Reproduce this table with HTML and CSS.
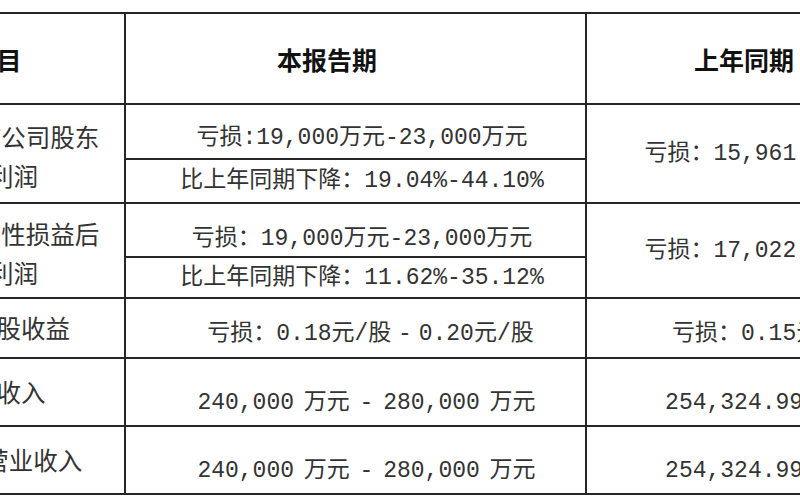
FILE: index.html
```html
<!DOCTYPE html>
<html lang="zh-CN">
<head>
<meta charset="utf-8">
<title>业绩预告</title>
<link rel="stylesheet" href="styles.css">
</head>
<body>
<div class="page">
  <div class="sheet">
    <div class="cell head c0">项目</div>
    <div class="cell head c1">本报告期</div>
    <div class="cell head c2">上年同期</div>

    <div class="cell label span2 twoline">归属于上市公司股东<br>的净利润</div>
    <div class="cell value r1a">亏损:19,000万元-23,000万元</div>
    <div class="cell prior span2">亏损：15,961.73万元</div>
    <div class="cell value">比上年同期下降：19.04%-44.10%</div>

    <div class="cell label span2 twoline">扣除非经常性损益后<br>的净利润</div>
    <div class="cell value r2a">亏损：19,000万元-23,000万元</div>
    <div class="cell prior span2">亏损：17,022.45万元</div>
    <div class="cell value">比上年同期下降：11.62%-35.12%</div>

    <div class="cell label">基本每股收益</div>
    <div class="cell value r3 tight">亏损：0.18元/股 - 0.20元/股</div>
    <div class="cell prior r3">亏损：0.15元/股</div>

    <div class="cell label">营业收入</div>
    <div class="cell value r45 tight">240,000 万元 - 280,000 万元</div>
    <div class="cell prior r45">254,324.99 万元</div>

    <div class="cell label">扣除后营业收入</div>
    <div class="cell value r45 tight">240,000 万元 - 280,000 万元</div>
    <div class="cell prior r45">254,324.99 万元</div>
  </div>
</div>
</body>
</html>
```

FILE: styles.css
```css
html, body {
  margin: 0;
  padding: 0;
  background: #ffffff;
}

.page {
  width: 800px;
  height: 500px;
  overflow: hidden;
  padding-top: 12px;
  box-sizing: border-box;
}

.sheet {
  display: grid;
  width: 1076px;
  margin-left: -133px;
  grid-template-columns: 257px 461px 356px;
  grid-template-rows: 91px 55px 44px 54px 41px 60px 68px 68px;
  border-top: 2px solid #262626;
  border-left: 2px solid #262626;
  box-sizing: border-box;
}

.cell {
  display: flex;
  align-items: center;
  justify-content: center;
  text-align: center;
  box-sizing: border-box;
  border-right: 2px solid #262626;
  border-bottom: 2px solid #262626;
  color: #333333;
  white-space: nowrap;
}

.span2 {
  grid-row: span 2;
}

.head {
  font-family: "Noto Sans CJK SC", sans-serif;
  font-weight: 700;
  font-size: 25px;
  color: #111111;
}

.head.c1 {
  padding-right: 57px;
}

.head.c2 {
  padding-right: 40px;
}

.label {
  font-family: "Noto Sans CJK SC", sans-serif;
  font-size: 24.5px;
  line-height: 40px;
  padding: 0 20px;
}

.label.twoline {
  padding: 4px 15px 0 0;
  line-height: 39px;
}

.value,
.prior {
  font-family: "Liberation Mono", "Noto Sans CJK SC", serif;
  font-size: 23px;
  line-height: 28px;
}

.value {
  padding-left: 13px;
}

.tight {
  word-spacing: -4px;
}

.r1a {
  padding-top: 13px;
}

.r2a {
  padding-top: 18px;
}

.r3 {
  padding-top: 12px;
}

.value.r3 {
  padding-left: 30px;
  word-spacing: -7px;
}

.r45 {
  padding-top: 22px;
}

.value.r45 {
  padding-left: 22px;
}
```
